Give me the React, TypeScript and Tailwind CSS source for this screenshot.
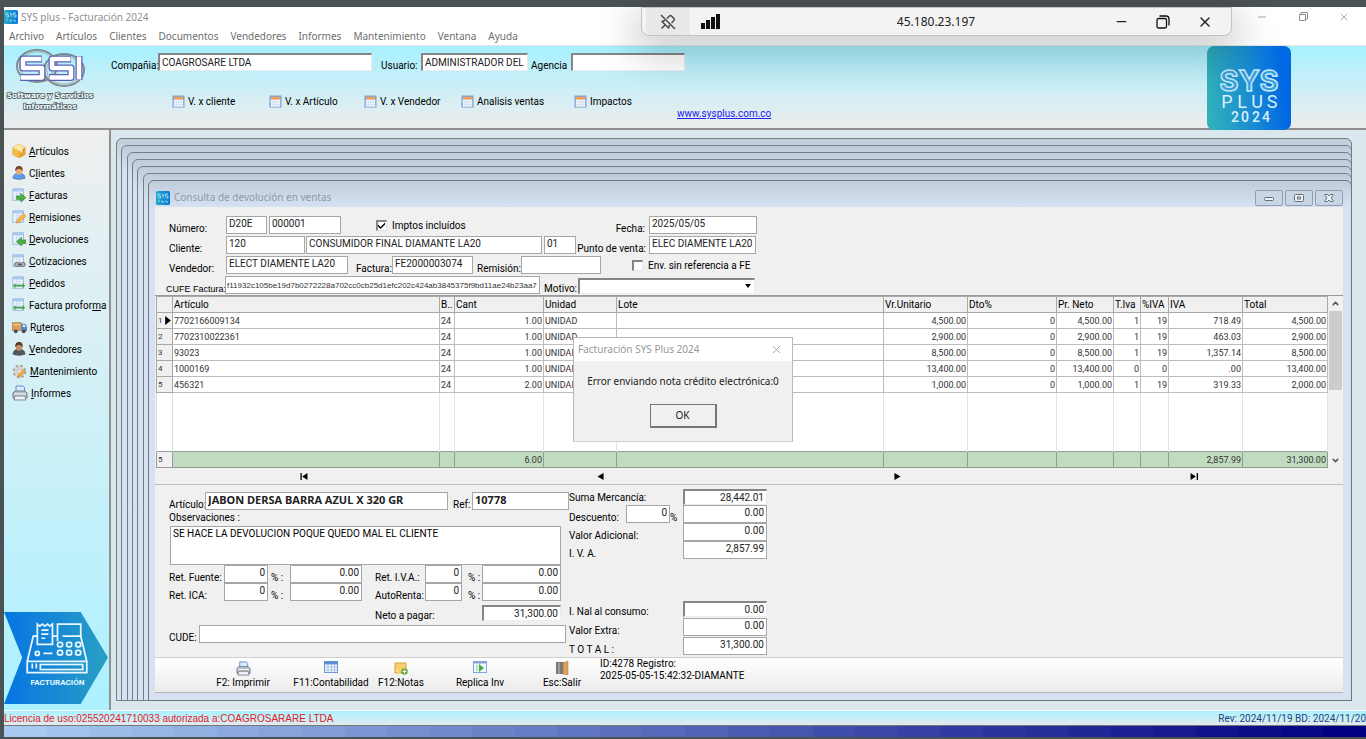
import type { ReactNode } from "react";
import { ChevronDown, ChevronUp, Minus, X } from "lucide-react";

const flatInput =
  "h-[18px] min-w-0 border border-[#a6a6a6] bg-white px-[2px] pb-[3px] leading-[12px] text-[#222] outline-none";
const sunkenInput =
  "border-t-2 border-l-2 border-r border-b border-t-[#858585] border-l-[#858585] border-r-[#ececec] border-b-[#ececec] bg-white px-[2px] leading-[12px] text-[#222] outline-none";

function Field({ label, value, labelClass = "", inputClass = "", sunken = false }: {
  label: string; value: string; labelClass?: string; inputClass?: string; sunken?: boolean;
}) {
  return (
    <label className="flex items-end">
      <span className={`shrink-0 whitespace-nowrap leading-[10px] ${labelClass}`}>{label}</span>
      <input defaultValue={value} className={`${sunken ? sunkenInput : flatInput} ${inputClass}`} />
    </label>
  );
}

function CheckField({ label, checked = false, className }: { label: string; checked?: boolean; className: string }) {
  return (
    <label className={`flex items-center gap-[5px] pb-[2px] leading-[13px] ${className}`}>
      <span className="relative flex">
        <input type="checkbox" defaultChecked={checked} className="peer size-[11px] appearance-none border-t-2 border-l-2 border-r border-b border-t-[#858585] border-l-[#858585] border-r-[#e4e4e4] border-b-[#e4e4e4] bg-white" />
        <svg viewBox="0 0 7 7" className="pointer-events-none absolute top-[2px] left-[2px] hidden size-[7px] peer-checked:block"><path d="M0 2.500l2.500 2.500L7 .5v2L2.500 7 0 4.500z" /></svg>
      </span>
      {label}
    </label>
  );
}

function Sheet({ children }: { children?: ReactNode }) {
  return (
    <svg viewBox="0 0 16 16" className="size-[14px] shrink-0">
      <rect x="1" y="1" width="12" height="13" fill="#f3f8ff" stroke="#8fb1de" />
      <rect x="1" y="1" width="12" height="3" fill="#a9c8ee" />
      <path d="M3 6.500h8M3 9h8M3 11.500h8M5.500 4v9M8.500 4v9" stroke="#bed2ea" strokeWidth=".8" />
      {children}
    </svg>
  );
}

function Person({ body, hair, skin }: { body: string; hair: string; skin: string }) {
  return (
    <svg viewBox="0 0 16 16" className="size-[14px] shrink-0">
      <path d="M1 14c0-4 3-6 7-6s7 2 7 6q-7 3-14 0z" fill={body} stroke="#465a80" strokeWidth=".5" />
      <ellipse cx="8" cy="5.500" rx="3.800" ry="4.500" fill={skin} />
      <path d="M4 6C3 1 6 0 8 0s5 1 4 6q-1-3-4-3T4 6z" fill={hair} />
    </svg>
  );
}

function Printer({ className = "size-[16px]" }: { className?: string }) {
  return (
    <svg viewBox="0 0 16 16" className={`shrink-0 ${className}`}>
      <path d="M4 7V1h7l1.500 1.500V7z" fill="#d9ecff" stroke="#5e92cc" />
      <path d="M1 8l2-2h10l2 2v5H1z" fill="#b9bec6" stroke="#737b88" />
      <path d="M3 11h10l1 4H2z" fill="#eef2f6" stroke="#838b97" />
      <path d="M2 9h12" stroke="#f6f8fa" />
    </svg>
  );
}

function Calendar() {
  return (
    <svg viewBox="0 0 14 14" className="size-[13px] shrink-0">
      <rect x=".5" y=".5" width="13" height="13" fill="#7ea7dc" />
      <rect x="2" y="2" width="10" height="3" fill="#f79a52" />
      <rect x="2" y="5" width="10" height="7.500" fill="#fff" />
      <path d="M2 7.500h10M2 10h10M4.500 5v7.500M7 5v7.500M9.500 5v7.500" stroke="#b9cfeb" strokeWidth=".7" />
    </svg>
  );
}

const boxIcon = (
  <svg viewBox="0 0 16 16" className="size-[14px] shrink-0">
    <path d="M1 4l7-4 7 4v8l-7 4-7-4z" fill="#f5bd45" stroke="#c9882a" strokeWidth=".6" />
    <path d="M1 4l7-4 7 4-7 4z" fill="#ffe49a" />
    <path d="M8 8l7-4v8l-7 4z" fill="#e8a22f" />
    <path d="M4.500 2l7 4v3l-2 1V7z" fill="#fff5d3" />
  </svg>
);
const truckIcon = (
  <svg viewBox="0 0 16 16" className="size-[15px] shrink-0">
    <rect x="0" y="3" width="10" height="8" fill="#dc9f5b" stroke="#8e6a45" strokeWidth=".7" />
    <path d="M1 5h8" stroke="#fbd5a0" />
    <path d="M10 4h4l2 3v5h-6z" fill="#5986bf" />
    <path d="M11.500 5h2l1.200 2.500h-3.200z" fill="#dff0ff" />
    <circle cx="4" cy="12" r="2" fill="#4a4a4a" /><circle cx="12.500" cy="12" r="2" fill="#4a4a4a" />
  </svg>
);
const gearIcon = (
  <svg viewBox="0 0 16 16" className="size-[15px] shrink-0">
    <circle cx="8" cy="8" r="6" fill="#d8d8d5" stroke="#a5a29a" strokeWidth="2.500" strokeDasharray="2.700 2" />
    <circle cx="8" cy="8" r="5.500" fill="#d9d6d0" />
    <circle cx="8" cy="8" r="2" fill="#f7f7f7" stroke="#989898" strokeWidth=".6" />
    <path d="M6 14l1-3 5-5 2 2-5 5z" fill="#f7ac3c" stroke="#bd7b28" strokeWidth=".6" />
  </svg>
);

const navItems: { pre: string; key: string; post: string; icon: ReactNode }[] = [
  { pre: "", key: "A", post: "rtículos", icon: boxIcon },
  { pre: "C", key: "l", post: "ientes", icon: <Person body="#5d9cec" hair="#744628" skin="#e9ab7c" /> },
  { pre: "", key: "F", post: "acturas", icon: <Sheet><path d="M5 9h5V6l6 5-6 5v-3H5z" fill="#4fae43" stroke="#2c7d2c" strokeWidth=".6" /></Sheet> },
  { pre: "", key: "R", post: "emisiones", icon: <Sheet><path d="M5 15l1-4 7-7 3 3-7 7z" fill="#f7b54a" stroke="#b97c2a" strokeWidth=".6" /></Sheet> },
  { pre: "", key: "D", post: "evoluciones", icon: <Sheet><path d="M16 9h-5V6l-6 5 6 5v-3h5z" fill="#4fae43" stroke="#2c7d2c" strokeWidth=".6" /></Sheet> },
  { pre: "", key: "C", post: "otizaciones", icon: <Sheet><g fill="#c5c8cc" stroke="#666" strokeWidth="1.200"><rect x="3" y="10" width="6" height="4" rx="2" /><rect x="9" y="10" width="6" height="4" rx="2" /></g><path d="M6 12h6" stroke="#555" /></Sheet> },
  { pre: "", key: "P", post: "edidos", icon: <Sheet><path d="M1 11l3-3v2h8V8l3 3-3 3v-2H4v2z" fill="#47a34b" /></Sheet> },
  { pre: "Factura profor", key: "m", post: "a", icon: <Sheet><path d="M1 11l3-3v2h8V8l3 3-3 3v-2H4v2z" fill="#47a34b" /></Sheet> },
  { pre: "R", key: "u", post: "teros", icon: truckIcon },
  { pre: "", key: "V", post: "endedores", icon: <Person body="#55565a" hair="#543a2b" skin="#c58d63" /> },
  { pre: "", key: "M", post: "antenimiento", icon: gearIcon },
  { pre: "", key: "I", post: "nformes", icon: <Printer /> },
];

const menu = ["Archivo", "Artículos", "Clientes", "Documentos", "Vendedores", "Informes", "Mantenimiento", "Ventana", "Ayuda"];

function SysBadge({ className }: { className: string }) {
  return (
    <svg viewBox="0 0 84 84" className={`shrink-0 ${className}`}>
      <defs>
        <linearGradient id="sysFill" x1="0" y1=".4" x2="1" y2=".3">
          <stop offset="0" stopColor="#2fb0bb" /><stop offset=".5" stopColor="#198bd2" /><stop offset=".9" stopColor="#0068e4" />
        </linearGradient>
      </defs>
      <rect width="84" height="84" rx="7" fill="url(#sysFill)" />
      <g textAnchor="middle">
        <text x="42" y="45" fontFamily="Inter, sans-serif" fontSize="29" fontWeight="700" fill="#3a9fd9" stroke="#c3e7f6" strokeWidth="1.500">SYS</text>
        <text x="20 35 50 65" y="62" fontFamily="Roboto, sans-serif" fontSize="18" fill="#d8f1fb">PLUS</text>
        <text x="28 38 49 59" y="76" fontFamily="Roboto, sans-serif" fontSize="14" fontWeight="500" fill="#d8f1fb">2024</text>
      </g>
    </svg>
  );
}

function MiniBadge() {
  return (
    <svg viewBox="0 0 14 14" className="size-[14px] shrink-0">
      <defs>
        <linearGradient id="miniFill"><stop offset="0" stopColor="#25a9c4" /><stop offset="1" stopColor="#0878e0" /></linearGradient>
      </defs>
      <rect width="14" height="14" rx="1.500" fill="url(#miniFill)" />
      <path d="M4.500 3H2v2h2.500v2H2M6 3l1.200 2v2M8.400 3L7.200 5M12 3H9.500v2H12v2H9.500" stroke="#bfe7f6" strokeWidth=".8" fill="none" />
      <path d="M2 10h2M6 9.500v1.500h2M10 9.500v1.500h2" stroke="#bfe7f6" strokeWidth=".8" fill="none" />
    </svg>
  );
}

function SsiLogo() {
  return (
    <svg viewBox="0 0 96 66" className="w-[96px]">
      <g fill="none">
        <ellipse cx="33" cy="20" rx="20" ry="16" stroke="#7f8d90" strokeWidth="2" />
        <ellipse cx="33" cy="20" rx="17.500" ry="14" stroke="#9fb0b3" />
        <ellipse cx="60" cy="24" rx="20" ry="16" stroke="#7f8d90" strokeWidth="2" />
        <ellipse cx="60" cy="24" rx="17.500" ry="14" stroke="#9fb0b3" />
        <g stroke="#5d5fb6" strokeWidth="7" strokeLinejoin="round">
          <path d="M38 13H19v9h19v9.500H16M67 13H48v9h19v9.500H45M75 10v24" />
        </g>
        <path d="M37.500 13H19v9h19v9.500H16.500M66.500 13H48v9h19v9.500H45.500M75 10.500v23" stroke="#fff" strokeWidth="4.500" strokeLinejoin="round" />
      </g>
      <g fontFamily="DejaVu Sans, sans-serif" fontSize="7.500" fontWeight="700" textAnchor="middle" fill="#f2fbfd" stroke="#505b60" strokeWidth="1.600" paintOrder="stroke">
        <text x="46" y="52">Software y Servicios</text>
        <text x="46" y="63">Informáticos</text>
      </g>
    </svg>
  );
}

function CashRegister() {
  return (
    <svg viewBox="0 0 104 91" className="w-full">
      <defs>
        <linearGradient id="regFill"><stop offset="0" stopColor="#0775e3" /><stop offset="1" stopColor="#299fc4" /></linearGradient>
      </defs>
      <path d="M0 0h76l27 45-27 46H0l18-46z" fill="url(#regFill)" />
      <g fill="none" stroke="#e9f8ff" strokeWidth="1.700">
        <path d="M33 24h-4l-6 25v11h59V49l-6-25h-4M23 49h59M48 24h5" />
        <path d="M33 32V12l2.500 2 2.500-2 2.500 2 2.500-2 2.500 2 2.500-2v20zM37 18h7M37 22h7M37 26h4" />
        <path d="M53 29V12h23v12M58 24h15" />
        <circle cx="33" cy="41" r="2" /><path d="M39 41h9" />
        <rect x="36" y="52" width="42" height="5" /><path d="M28 51v5M32 51v5" />
        {[32, 40].map((y) => [55, 64, 73].map((x) => <rect key={`${x}-${y}`} x={x - 2} y={y - 2} width="5" height="4.500" rx="2" />))}
      </g>
      <text x="53" y="72" textAnchor="middle" fontFamily="Roboto, sans-serif" fontSize="8" fontWeight="700" fill="#e9f8ff">FACTURACIÓN</text>
    </svg>
  );
}

const columns = [
  { name: "Artículo", width: "w-[267px]" },
  { name: "B..", width: "w-[15px]" },
  { name: "Cant", width: "w-[89px]" },
  { name: "Unidad", width: "w-[73px]" },
  { name: "Lote", width: "" },
  { name: "Vr.Unitario", width: "w-[84px]" },
  { name: "Dto%", width: "w-[89px]" },
  { name: "Pr. Neto", width: "w-[57px]" },
  { name: "T.Iva", width: "w-[27px]" },
  { name: "%IVA", width: "w-[28px]" },
  { name: "IVA", width: "w-[74px]" },
  { name: "Total", width: "w-[85px]" },
];
const leftAligned = new Set([0, 1, 3, 4]);
const rows = [
  ["7702166009134", "24", "1.00", "UNIDAD", "", "4,500.00", "0", "4,500.00", "1", "19", "718.49", "4,500.00"],
  ["7702310022361", "24", "1.00", "UNIDAD", "", "2,900.00", "0", "2,900.00", "1", "19", "463.03", "2,900.00"],
  ["93023", "24", "1.00", "UNIDAD", "", "8,500.00", "0", "8,500.00", "1", "19", "1,357.14", "8,500.00"],
  ["1000169", "24", "1.00", "UNIDAD", "", "13,400.00", "0", "13,400.00", "0", "0", ".00", "13,400.00"],
  ["456321", "24", "2.00", "UNIDAD", "", "1,000.00", "0", "1,000.00", "1", "19", "319.33", "2,000.00"],
];
const totals = ["", "", "6.00", "", "", "", "", "", "", "", "2,857.99", "31,300.00"];

function Grid() {
  return (
    <div className="flex min-h-0 flex-1 border-t border-[#9a9a9a] pl-px">
      <table className="h-full min-w-0 flex-1 table-fixed border-collapse bg-white text-[9px] leading-[12px] text-[#333]">
        <colgroup>
          <col className="w-[16px]" />
          {columns.map((c) => <col key={c.name} className={c.width} />)}
        </colgroup>
        <thead>
          <tr className="h-[16px] bg-[#f0f0f0] text-[10px] text-black">
            <th className="border border-[#a8a8a8] p-0" aria-label="Fila" />
            {columns.map((c) => (
              <th key={c.name} className="overflow-hidden border border-[#a8a8a8] p-0 pl-px text-left font-normal whitespace-nowrap">{c.name}</th>
            ))}
          </tr>
        </thead>
        <tbody>
          {rows.map((row, i) => (
            <tr key={row[0]} className="h-[16px]">
              <th className="border border-[#a8a8a8] bg-[#f0f0f0] p-0 pl-px text-left text-[8px] font-normal">
                <span className="flex items-center gap-[2px]">{i + 1}
                  {i === 0 && <svg viewBox="0 0 5 8" className="h-[9px] w-[6px]"><path d="M0 0l5 4-5 4z" /></svg>}
                </span>
              </th>
              {row.map((cell, j) => (
                <td key={j} className={`border border-[#bdbdbd] p-0 px-px whitespace-nowrap ${leftAligned.has(j) ? "text-left" : "text-right"}`}>{cell}</td>
              ))}
            </tr>
          ))}
          <tr>
            <td className="border-x border-[#dcdcdc]" />
            {columns.map((c) => <td key={c.name} className="border-x border-[#e4e4e4] p-0" />)}
          </tr>
        </tbody>
        <tfoot>
          <tr className="h-[16px] bg-[#c0dcc0]">
            <th className="border border-[#9a9a9a] bg-[#f0f0f0] p-0 pl-px text-left text-[8px] font-normal">5</th>
            {totals.map((t, j) => <td key={j} className="border border-[#949c94] p-0 px-px text-right">{t}</td>)}
          </tr>
        </tfoot>
      </table>
      <div className="flex w-[15px] flex-col items-center justify-between bg-[#f1f1f1] text-[#555]">
        <button aria-label="Subir" className="flex h-[15px] items-center"><ChevronUp size={9} strokeWidth={4} /></button>
        <div className="mb-auto h-[79px] w-[13px] bg-[#cdcdcd]" />
        <button aria-label="Bajar" className="flex h-[15px] items-center"><ChevronDown size={9} strokeWidth={4} /></button>
      </div>
    </div>
  );
}

const navButtons = [
  { name: "Primero", d: "M1 0h1.500v8H1zM9 0v8L3 4z" },
  { name: "Anterior", d: "M8 0v8L1 4z" },
  { name: "Siguiente", d: "M1 0l7 4-7 4z" },
  { name: "Último", d: "M0 0l6 4-6 4zM7 0h1.500v8H7z" },
];

function WindowFrame({ position }: { position: string }) {
  return <div className={`absolute right-[14px] bottom-[9px] rounded-t-[6px] border border-[#777d84] bg-gradient-to-b from-[#bfccda] to-[#d6e2f1] to-[26px] ${position}`} />;
}

const tools: { label: string; width: string; icon: ReactNode }[] = [
  { label: "F2: Imprimir", width: "ml-[53px] w-[70px]", icon: <Printer className="size-[15px]" /> },
  { label: "F11:Contabilidad", width: "ml-[12px] w-[82px]", icon: <svg viewBox="0 0 14 12" className="h-[12px] w-[14px]"><rect x=".5" y=".5" width="13" height="11" fill="#f4f8ff" stroke="#6f9ad6" /><path d="M0 2h14" stroke="#5d8ed3" strokeWidth="3" /><path d="M1 6h12M1 9h12M4 3v8M7.500 3v8M10.500 3v8" stroke="#a9c1e4" /></svg> },
  { label: "F12:Notas", width: "w-[58px]", icon: <svg viewBox="0 0 14 14" className="size-[14px]"><rect x="1" y="2" width="11" height="10" fill="#f9cf6c" stroke="#dca13a" /><path d="M2 9l3 3" stroke="#fff1c4" /><circle cx="10.500" cy="10.500" r="3.300" fill="#68a83e" /><path d="M8.500 10.500h4M10.500 8.500v4" stroke="#fff" /></svg> },
  { label: "Replica Inv", width: "ml-[16px] w-[68px]", icon: <svg viewBox="0 0 14 12" className="h-[12px] w-[14px]"><rect x=".5" y=".5" width="13" height="11" fill="#eef6ff" stroke="#83a8d8" /><path d="M0 1.500h14" stroke="#83a8d8" strokeWidth="2" /><path d="M6 3l5 4-5 4z" fill="#4aa94a" /><path d="M4 4v6" stroke="#8bc98b" /></svg> },
  { label: "Esc:Salir", width: "ml-[18px] w-[60px]", icon: <svg viewBox="0 0 14 14" className="size-[14px]"><path d="M1 1h8v12H1z" fill="#77797d" /><path d="M3 2h2v11H3z" fill="#9b9da1" /><path d="M8 2l5-2v14l-5-1z" fill="#d9a25b" stroke="#a8733a" strokeWidth=".5" /></svg> },
];

function ReturnWindow() {
  return (
    <section className="absolute top-[50px] right-[14px] bottom-[9px] left-[37px] flex flex-col rounded-t-[6px] border border-[#70757b] bg-gradient-to-b from-[#bfccda] to-[#d6e2f1] to-[26px] pr-[8px] pb-[7px] pl-[6px]">
      <header className="flex h-[26px] shrink-0 items-center pt-[7px] font-['Noto_Sans',sans-serif] text-[10px] text-[#8f99a5]">
        <span className="pl-px"><MiniBadge /></span>
        <h1 className="pl-[4px]">Consulta de devolución en ventas</h1>
        <div className="ml-auto flex gap-[2px]">
          {["Minimizar", "Restaurar", "Cerrar"].map((name) => (
            <button key={name} aria-label={name} className="flex h-[16px] w-[28px] items-center justify-center rounded-[2px] border border-[#929fb3] bg-[#c8d5e3]">
              <svg viewBox="0 0 10 8" className="h-[8px] w-[10px]" fill="#eef2f6" stroke="#626b78">
                {name === "Minimizar" && <rect x=".5" y="3.500" width="9" height="3" rx="1" />}
                {name === "Restaurar" && <><rect x=".5" y=".5" width="9" height="7" rx="1" /><rect x="3.500" y="3" width="3" height="2" /></>}
                {name === "Cerrar" && <path d="M1 .5h2.500L5 2 6.500.5H9v1L7 4l2 2.500v1H6.500L5 6 3.500 7.500H1v-1L3 4 1 1.500z" />}
              </svg>
            </button>
          ))}
        </div>
      </header>

      <div className="flex min-h-0 flex-1 flex-col bg-[#f0f0f0]">
        <form className="flex h-[88px] shrink-0 flex-col gap-[2px] pt-[9px]">
          <div className="flex items-end">
            <Field label="Número:" value="D20E" labelClass="w-[71px] pl-[14px]" inputClass="w-[41px]" />
            <input aria-label="Consecutivo" defaultValue="000001" className={`${flatInput} ml-[2px] w-[72px]`} />
            <CheckField checked label="Imptos incluídos" className="ml-[35px] w-[132px]" />
            <Field label="Fecha:" value="2025/05/05" labelClass="ml-[87px] w-[54px] pr-[4px] text-right" inputClass="w-[108px]" />
          </div>
          <div className="flex items-end">
            <Field label="Cliente:" value="120" labelClass="w-[71px] pl-[14px]" inputClass="w-[79px]" />
            <input aria-label="Nombre del cliente" defaultValue="CONSUMIDOR FINAL DIAMANTE LA20" className={`${flatInput} ml-px w-[236px]`} />
            <input aria-label="Sucursal" defaultValue="01" className={`${flatInput} ml-[2px] w-[32px]`} />
            <Field label="Punto de venta:" value="ELEC DIAMENTE LA20" labelClass="w-[73px] pr-[3px] text-right" inputClass="w-[107px]" />
          </div>
          <div className="flex items-end">
            <Field label="Vendedor:" value="ELECT DIAMENTE LA20" labelClass="w-[71px] pl-[14px]" inputClass="w-[122px]" />
            <Field label="Factura:" value="FE2000003074" labelClass="w-[44px] pl-[8px]" inputClass="w-[81px]" />
            <Field label="Remisión:" value="" labelClass="w-[48px] pl-[4px]" inputClass="w-[80px]" />
            <CheckField label="Env. sin referencia a FE" className="ml-[31px]" />
          </div>
          <div className="flex items-end">
            <label className="flex items-end">
              <span className="w-[70px] pl-[11px] font-['Liberation_Sans',sans-serif] text-[9px] leading-[10px] whitespace-nowrap">CUFE Factura:</span>
              <input defaultValue="f11932c105be19d7b0272228a702cc0cb25d1efc202c424ab3845375f9bd11ae24b23aa7" className="h-[18px] w-[315px] border border-[#a6a6a6] bg-white px-px font-['Liberation_Sans',sans-serif] text-[8px] text-[#333] outline-none" />
            </label>
            <label className="flex items-end">
              <span className="w-[38px] pl-[4px] leading-[10px]">Motivo:</span>
              <span className="relative flex">
                <select className={`${sunkenInput} h-[16px] w-[177px] appearance-none`} defaultValue=""><option value="" /></select>
                <svg viewBox="0 0 6 4" className="pointer-events-none absolute top-[6px] right-[4px] w-[6px]"><path d="M0 0h6L3 4z" /></svg>
              </span>
            </label>
          </div>
        </form>

        <Grid />

        <div className="flex h-[17px] shrink-0 items-center border-b border-[#bdbdbd]">
          {navButtons.map((b) => (
            <button key={b.name} aria-label={b.name} className="flex flex-1 justify-center"><svg viewBox="0 0 9 8" className="h-[7px] w-[9px]"><path d={b.d} /></svg></button>
          ))}
        </div>

        <div className="flex h-[172px] shrink-0">
          <div className="flex w-[414px] flex-col pt-[7px]">
            <div className="flex items-end">
              <Field label="Artículo:" value="JABON DERSA BARRA AZUL X 320 GR" labelClass="w-[50px] pl-[14px]" inputClass="w-[243px] font-['Noto_Sans',sans-serif] text-[11px] font-bold" />
              <Field label="Ref:" value="10778" labelClass="w-[24px] pl-[5px]" inputClass="w-[97px] font-['Noto_Sans',sans-serif] text-[11px] font-bold" />
            </div>
            <label className="flex flex-col">
              <span className="pl-[14px] leading-[16px]">Observaciones :</span>
              <textarea className="ml-[15px] h-[39px] w-[391px] resize-none border border-[#a6a6a6] bg-white px-[2px] leading-[14px] outline-none" defaultValue="SE HACE LA DEVOLUCION POQUE QUEDO MAL EL CLIENTE" />
            </label>
            {[["Ret. Fuente:", "Ret. I.V.A.:"], ["Ret. ICA:", "AutoRenta:"]].map(([a, b]) => (
              <div key={a} className="flex items-end">
                <Field label={a} value="0" labelClass="w-[69px] pl-[14px]" inputClass="w-[44px] text-right" />
                <Field label="% :" value="0.00" labelClass="w-[22px] pl-[3px]" inputClass="w-[72px] text-right" />
                <Field label={b} value="0" labelClass="w-[63px] pl-[13px]" inputClass="w-[37px] text-right" />
                <Field label="% :" value="0.00" labelClass="w-[20px] pl-[6px]" inputClass="w-[79px] text-right" />
              </div>
            ))}
            <div className="flex pt-[4px] pl-[220px]">
              <Field sunken label="Neto a pagar:" value="31,300.00" labelClass="w-[107px]" inputClass="h-[16px] w-[79px] text-right" />
            </div>
            <div className="flex pt-[4px]">
              <Field label="CUDE:" value="" labelClass="w-[44px] pl-[14px]" inputClass="w-[367px]" />
            </div>
          </div>
          <div className="flex w-[200px] flex-col pt-[4px]">
            <Field sunken label="Suma Mercancía:" value="28,442.01" labelClass="w-[114px] pb-[2px]" inputClass="h-[16px] w-[84px] text-right" />
            <div className="flex items-end">
              <Field label="Descuento:" value="0" labelClass="w-[57px]" inputClass="w-[44px] text-right" />
              <Field label="%" value="0.00" labelClass="w-[13px]" inputClass="w-[84px] text-right" />
            </div>
            <Field label="Valor Adicional:" value="0.00" labelClass="w-[114px]" inputClass="w-[84px] text-right" />
            <Field label="I. V. A." value="2,857.99" labelClass="w-[114px]" inputClass="w-[84px] text-right" />
            <div className="flex flex-col gap-px pt-[42px]">
              <Field sunken label="I. Nal al consumo:" value="0.00" labelClass="w-[114px]" inputClass="h-[16px] w-[84px] text-right" />
              <Field label="Valor Extra:" value="0.00" labelClass="w-[114px]" inputClass="w-[84px] text-right" />
              <Field label="T O T A L :" value="31,300.00" labelClass="w-[114px]" inputClass="w-[84px] text-right" />
            </div>
          </div>
        </div>

        <footer className="flex h-[36px] shrink-0 border-t border-b border-t-[#cfcfcf] border-b-[#b5b5b5] bg-gradient-to-b from-white to-[#ebebeb]">
          {tools.map((t) => (
            <button key={t.label} className={`flex flex-col items-center justify-between pt-[3px] pb-[3px] whitespace-nowrap ${t.width}`}>
              {t.icon}<span className="leading-[13px]">{t.label}</span>
            </button>
          ))}
          <p className="pl-[8px] leading-[12px]">ID:4278 Registro:<br />2025-05-05-15:42:32-DIAMANTE</p>
        </footer>
      </div>
    </section>
  );
}

function RemoteBar() {
  return (
    <div className="absolute top-[7px] left-[641px] flex h-[29px] w-[591px] items-center rounded-b-[8px] border border-[#c2c2c2] bg-[#f3f3f3] font-['Noto_Sans',sans-serif] text-[12px] text-[#222] shadow-[0_12px_40px_8px_rgba(0,0,0,0.2)]">
      <button aria-label="Desanclar" className="ml-[4px] flex h-full w-[44px] items-center justify-center bg-[#ebe9e8]">
        <svg viewBox="0 0 16 16" className="size-[16px]" fill="none" stroke="#4a4a4a" strokeWidth="1.500" strokeLinejoin="round">
          <path d="M7 4.500L9.500 2a1.500 1.500 0 0 1 2 0L14 4.500a1.500 1.500 0 0 1 0 2L11.500 9M9.500 11l-1 3-6.500-6.500 3-1M5 11l-3.500 3.500M1 1l14 14" />
        </svg>
      </button>
      <svg viewBox="0 0 19 15" className="ml-[11px] h-[15px] w-[19px]" fill="#111"><path d="M0 9h4v6H0zM5 6h4v9H5zM10 3h4v12h-4zM15 0h4v15h-4z" /></svg>
      <span className="flex-1 pl-[38px] text-center">45.180.23.197</span>
      <div className="flex items-center gap-[27px] pr-[18px]">
        <button aria-label="Minimizar"><Minus size={15} /></button>
        <button aria-label="Restaurar">
          <svg viewBox="0 0 14 14" className="size-[14px]" fill="none" stroke="#111" strokeWidth="1.300"><rect x="1" y="3.500" width="9.500" height="9.500" rx="1.500" /><path d="M3.500 1H10a3 3 0 0 1 3 3v6.500" /></svg>
        </button>
        <button aria-label="Cerrar"><X size={16} /></button>
      </div>
    </div>
  );
}

function ErrorDialog() {
  return (
    <div role="alertdialog" aria-labelledby="error-title" className="absolute top-[337px] left-1/2 flex h-[105px] w-[220px] -translate-x-1/2 flex-col border border-[#b9b9b9] border-b-[#d0d0d0] bg-[#f0f0f0] font-['Noto_Sans',sans-serif] text-[10px] text-[#222]">
      <header className="flex h-[23px] items-center justify-between bg-white pr-[9px] pl-[4px] text-[#999]">
        <h2 id="error-title">Facturación SYS Plus 2024</h2>
        <button aria-label="Cerrar"><X size={13} strokeWidth={1.5} /></button>
      </header>
      <p className="pt-[13px] text-center leading-[15px]">Error enviando nota crédito electrónica:0</p>
      <button className="mx-auto mt-[15px] h-[24px] w-[67px] border border-r-2 border-b-2 border-[#777] bg-[#f0f0f0]">OK</button>
    </div>
  );
}

const shortcuts = [
  { label: "V. x cliente", width: "w-[97px]" },
  { label: "V. x Artículo", width: "w-[95px]" },
  { label: "V. x Vendedor", width: "w-[97px]" },
  { label: "Analisis ventas", width: "w-[113px]" },
  { label: "Impactos", width: "w-[60px]" },
];

const STEPS = 32;

export default function App() {
  return (
    <div className="relative flex h-screen min-h-[700px] flex-col overflow-hidden bg-[#4b5254] pt-[7px] pb-[2px] pl-[4px] font-['Roboto',sans-serif] text-[10px] text-black">
      <header className="flex h-[20px] shrink-0 items-center bg-white font-['Noto_Sans',sans-serif] text-[10px] text-[#8e8e8e]">
        <MiniBadge />
        <span className="pl-[3px]">SYS plus - Facturación 2024</span>
        <div className="ml-auto flex items-center gap-[30px] pr-[16px]">
          <button aria-label="Minimizar ventana"><Minus size={12} strokeWidth={1.5} /></button>
          <button aria-label="Restaurar ventana">
            <svg viewBox="0 0 10 10" className="size-[10px]" fill="none" stroke="#8e8e8e"><path d="M1.500 2.500h6v6h-6zM3 2V.5h6.500V7H8" /></svg>
          </button>
          <button aria-label="Cerrar ventana"><X size={12} strokeWidth={1.5} /></button>
        </div>
      </header>
      <nav className="flex h-[19px] shrink-0 items-center gap-[12px] border-b border-[#e4e4e4] bg-white pl-[5px] font-['Noto_Sans',sans-serif] text-[10px] text-[#6e6e6e]">
        {menu.map((m) => <button key={m}>{m}</button>)}
      </nav>

      <div className="flex h-[84px] shrink-0 items-start border-b-2 border-[#8e8e8e] bg-gradient-to-b from-[#a6f0ff] to-[#ededed]">
        <SsiLogo />
        <div className="flex flex-col gap-[24px] pt-[7px] pl-[11px]">
          <div className="flex items-end">
            <Field sunken label="Compañia:" value="COAGROSARE LTDA" labelClass="w-[47px]" inputClass="h-[18px] w-[214px]" />
            <Field sunken label="Usuario:" value="ADMINISTRADOR DEL" labelClass="w-[49px] pl-[9px]" inputClass="h-[18px] w-[107px]" />
            <Field sunken label="Agencia" value="" labelClass="w-[43px] pl-[3px]" inputClass="h-[18px] w-[114px]" />
          </div>
          <div className="flex items-start pl-[61px]">
            {shortcuts.map((s) => (
              <button key={s.label} className={`flex items-center gap-[3px] leading-[13px] whitespace-nowrap ${s.width}`}><Calendar />{s.label}</button>
            ))}
            <a href="http://www.sysplus.com.co" className="ml-[43px] pt-[12px] leading-[13px] whitespace-nowrap text-[#2020f0] underline">www.sysplus.com.co</a>
          </div>
        </div>
        <SysBadge className="mr-[75px] ml-auto size-[84px]" />
      </div>

      <div className="flex min-h-0 flex-1">
        <aside className="flex w-[105px] shrink-0 flex-col bg-gradient-to-b from-[#efefef] to-[#abf1ff]">
          <nav className="flex flex-col pt-[10px] pl-[8px]">
            {navItems.map((n) => (
              <button key={n.pre + n.key + n.post} className="flex h-[22px] items-center gap-[3px] whitespace-nowrap">
                {n.icon}<span>{n.pre}<u>{n.key}</u>{n.post}</span>
              </button>
            ))}
          </nav>
          <div className="mt-auto pb-[6px]"><CashRegister /></div>
        </aside>
        <main className="relative min-w-0 flex-1 border-l-2 border-[#8b9194] bg-[#dae7ec]">
          <WindowFrame position="top-[8px] left-[5px]" />
          <WindowFrame position="top-[15px] left-[10px]" />
          <WindowFrame position="top-[22px] left-[16px]" />
          <WindowFrame position="top-[29px] left-[21px]" />
          <WindowFrame position="top-[36px] left-[26px]" />
          <WindowFrame position="top-[43px] left-[32px]" />
          <ReturnWindow />
        </main>
      </div>

      <footer className="shrink-0">
        <div className="flex h-[16px] items-center justify-between border-t border-b border-t-white border-b-[#777] bg-gradient-to-b from-[#a9f2ff] to-[#e2eaee] font-['Liberation_Sans',sans-serif]">
          <span className="text-[#e0202a]">Licencia de uso:025520241710033 autorizada a:COAGROSARARE LTDA</span>
          <span className="font-['Roboto',sans-serif] text-[#1a4480]">Rev: 2024/11/19 BD: 2024/11/20</span>
        </div>
        <div className="flex h-[11px]">
          {Array.from({ length: STEPS }, (_, i) => {
            const t = i / (STEPS - 1);
            const mix = (from: number, to: number) => Math.round(from + (to - from) * t);
            return <div key={i} className="flex-1" style={{ backgroundColor: `rgb(${mix(166, 0)}, ${mix(202, 0)}, ${mix(240, 128)})` }} />;
          })}
        </div>
      </footer>

      <RemoteBar />
      <ErrorDialog />
    </div>
  );
}
